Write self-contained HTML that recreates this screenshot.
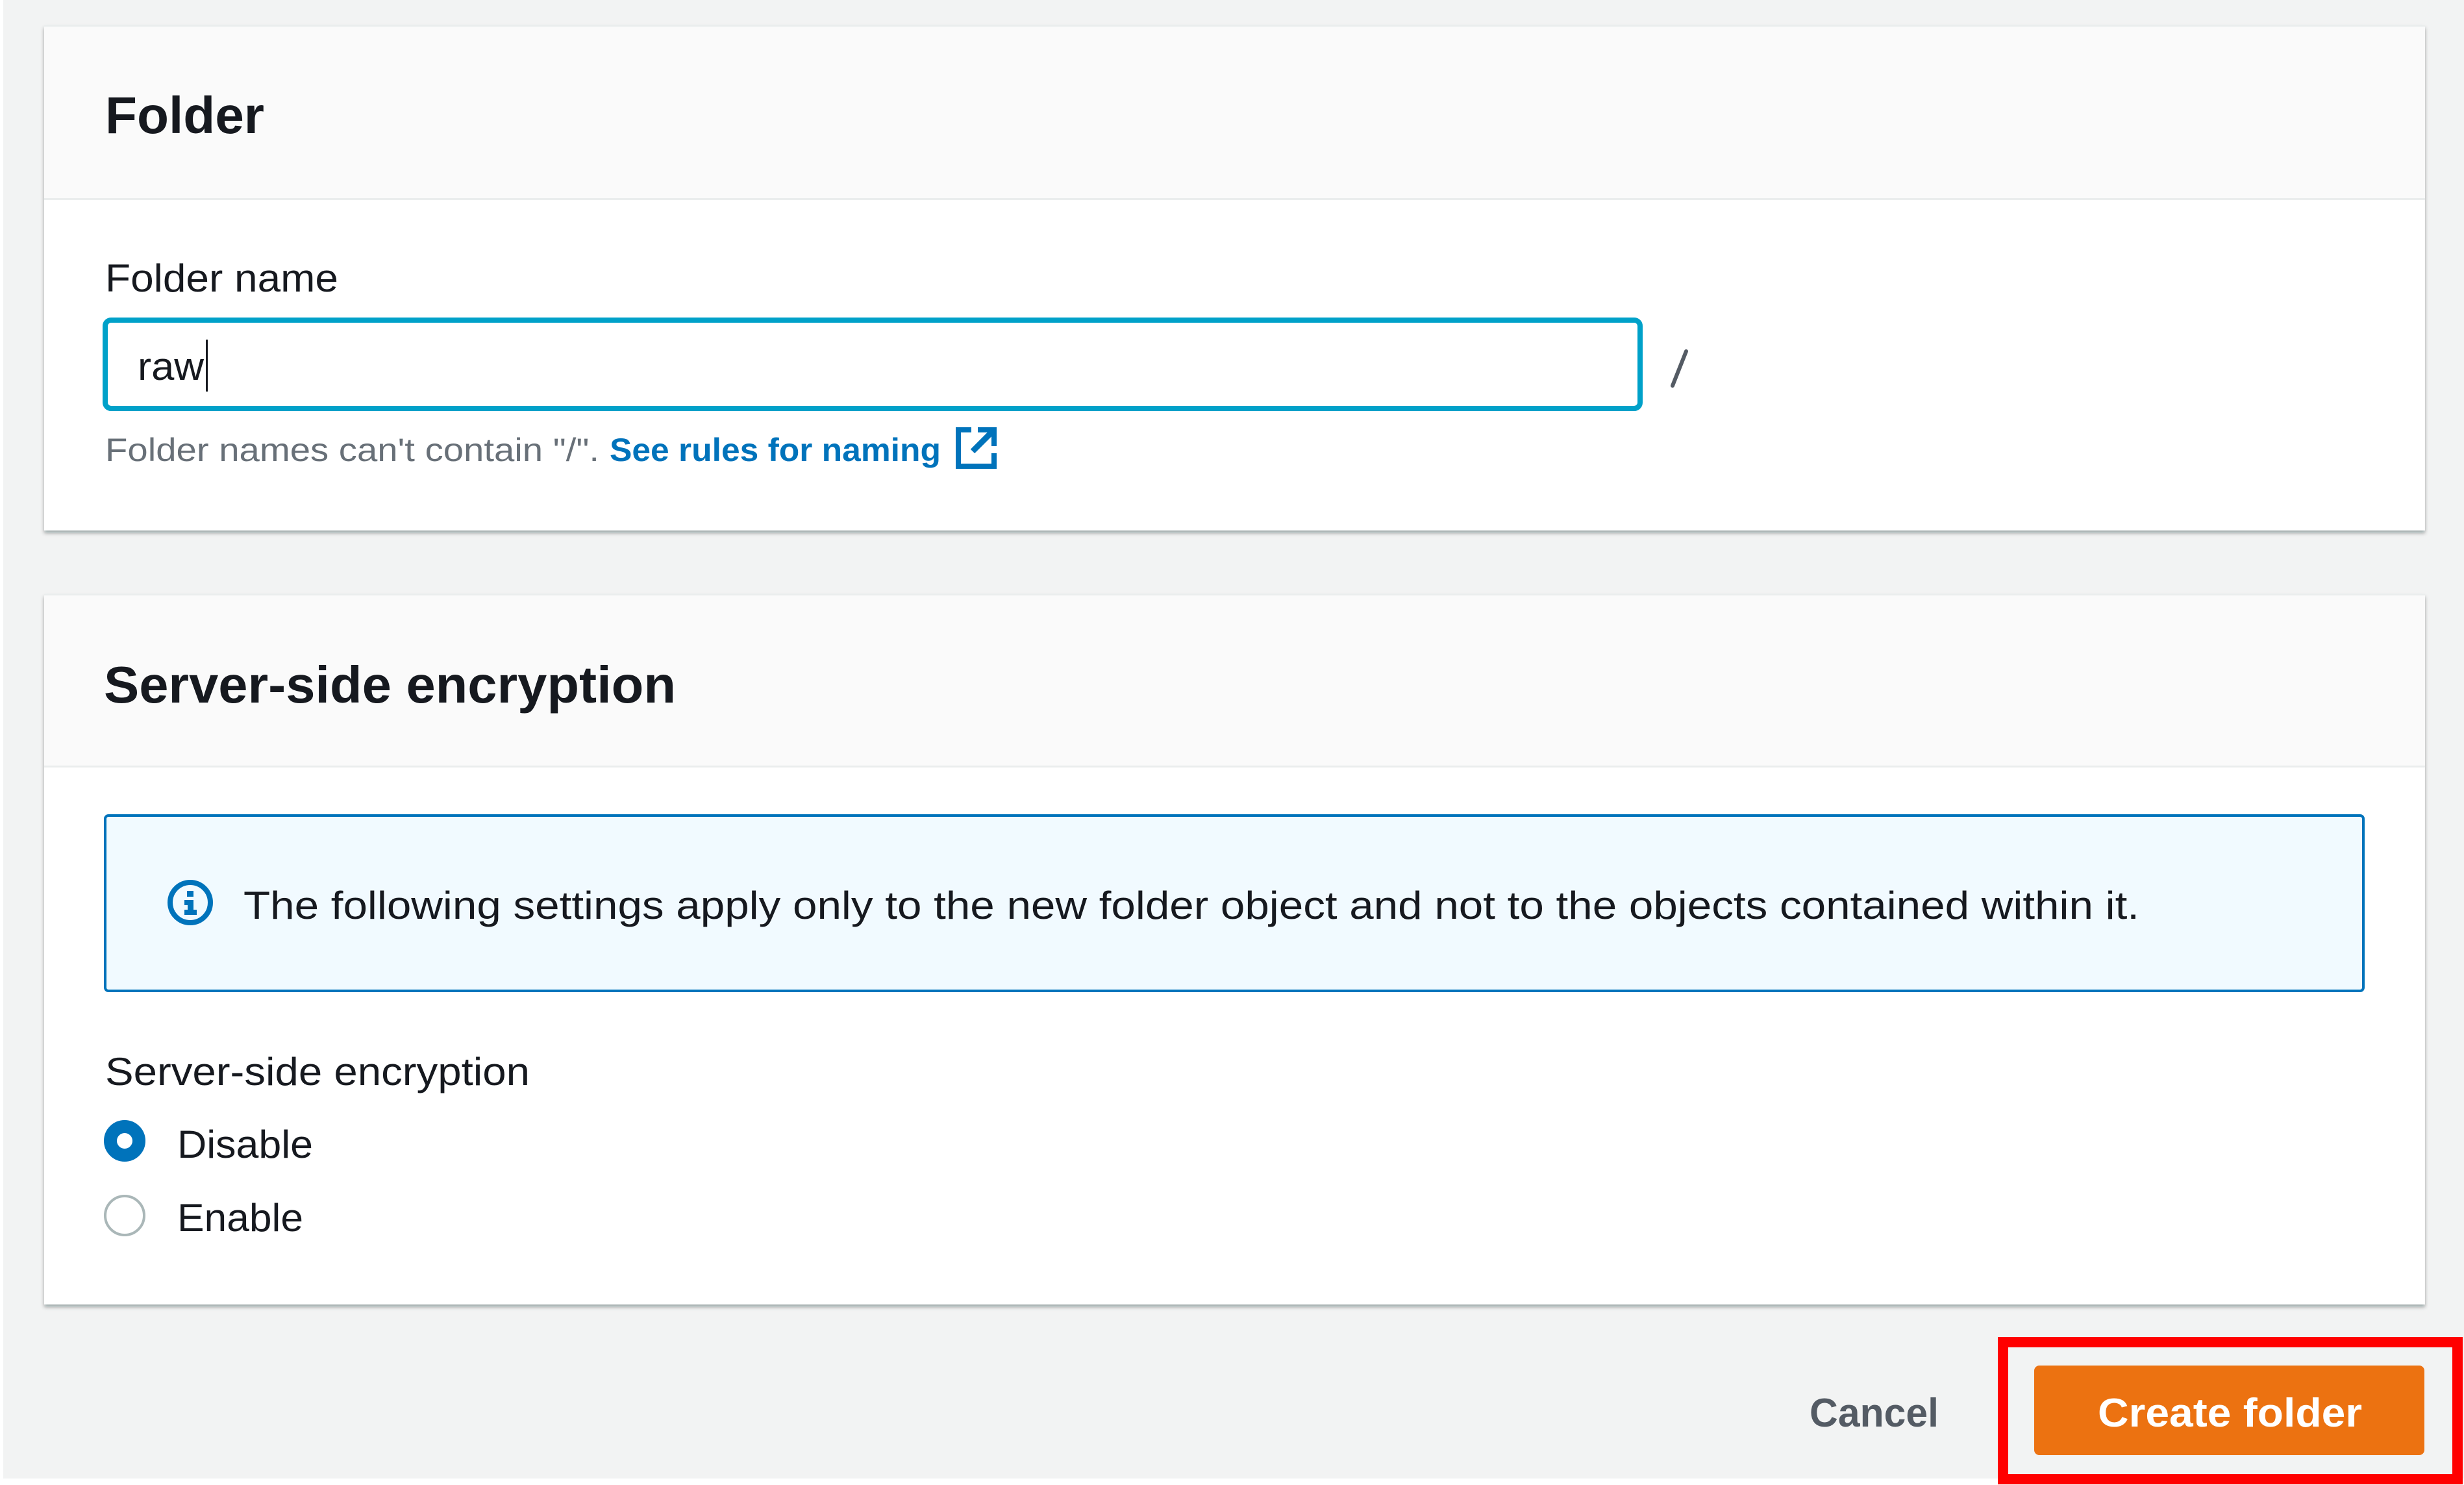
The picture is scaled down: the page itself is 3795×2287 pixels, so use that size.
<!DOCTYPE html>
<html><head><meta charset="utf-8"><style>
html,body{margin:0;padding:0;background:#f2f3f3;width:3795px;height:2287px;overflow:hidden}
svg{display:block}
text{font-family:"Liberation Sans",sans-serif}
</style></head><body>
<svg width="3795" height="2287" viewBox="0 0 3795 2287" xmlns="http://www.w3.org/2000/svg">
<defs>
<filter id="sh" x="-2%" y="-5%" width="104%" height="112%">
<feDropShadow dx="0" dy="4" stdDeviation="3" flood-color="#001c24" flood-opacity="0.35"/>
</filter>
</defs>
<rect x="0" y="0" width="3795" height="2287" fill="#f2f3f3"/>
<rect x="0" y="2277" width="3795" height="10" fill="#ffffff"/>
<rect x="0" y="0" width="5" height="2287" fill="#ffffff"/>

<!-- Card 1 -->
<g filter="url(#sh)"><rect x="68" y="39" width="3667" height="778" fill="#ffffff"/></g>
<rect x="68" y="39" width="3667" height="268" fill="#fafafa"/>
<rect x="68" y="305" width="3667" height="3" fill="#eaeded"/>
<rect x="68" y="39" width="3667" height="2" fill="#eaeded"/>
<text x="162" y="205" font-size="80" font-weight="bold" fill="#16191f" textLength="245" lengthAdjust="spacingAndGlyphs">Folder</text>
<text x="162" y="449" font-size="60" fill="#16191f" textLength="359" lengthAdjust="spacingAndGlyphs">Folder name</text>
<rect x="162" y="493" width="2364" height="136" rx="9" fill="#fff" stroke="#00a1c9" stroke-width="8"/>
<text x="212" y="585" font-size="60" fill="#16191f" textLength="102" lengthAdjust="spacingAndGlyphs">raw</text>
<rect x="317" y="523" width="3" height="80" fill="#16191f"/>
<line x1="2597" y1="541" x2="2576" y2="594" stroke="#545b64" stroke-width="6" stroke-linecap="round"/>
<text x="162" y="710" font-size="50" fill="#687078" textLength="761" lengthAdjust="spacingAndGlyphs">Folder names can't contain "/".</text>
<text x="939" y="710" font-size="50" font-weight="bold" fill="#0073bb" textLength="510" lengthAdjust="spacingAndGlyphs">See rules for naming</text>
<g fill="none" stroke="#0073bb" stroke-width="8">
<path d="M1496 662 H1476 V718 H1531 V698"/>
<path d="M1506 662 H1531 V687" />
<path d="M1529 664 L1498 695" stroke-width="9"/>
</g>

<!-- Card 2 -->
<g filter="url(#sh)"><rect x="68" y="915" width="3667" height="1094" fill="#ffffff"/></g>
<rect x="68" y="915" width="3667" height="266" fill="#fafafa"/>
<rect x="68" y="1179" width="3667" height="3" fill="#eaeded"/>
<rect x="68" y="915" width="3667" height="2" fill="#eaeded"/>
<text x="160" y="1082" font-size="80" font-weight="bold" fill="#16191f" textLength="881" lengthAdjust="spacingAndGlyphs">Server-side encryption</text>

<rect x="162" y="1256" width="3478" height="270" rx="5" fill="#f1faff" stroke="#0073bb" stroke-width="4"/>
<circle cx="293" cy="1390" r="31" fill="none" stroke="#0073bb" stroke-width="8"/>
<rect x="288" y="1372" width="10" height="9" fill="#0073bb"/>
<path d="M284 1386 H298 V1401 H303 V1409 H284 V1401 H289 V1394 H284 Z" fill="#0073bb"/>
<text x="375" y="1415" font-size="60" fill="#16191f" textLength="2920" lengthAdjust="spacingAndGlyphs">The following settings apply only to the new folder object and not to the objects contained within it.</text>

<text x="162" y="1671" font-size="60" fill="#16191f" textLength="654" lengthAdjust="spacingAndGlyphs">Server-side encryption</text>
<circle cx="192" cy="1757" r="22" fill="#fff" stroke="#0073bb" stroke-width="20"/>
<text x="273" y="1783" font-size="60" fill="#16191f" textLength="209" lengthAdjust="spacingAndGlyphs">Disable</text>
<circle cx="192" cy="1872" r="30" fill="#fff" stroke="#aab7b8" stroke-width="4"/>
<text x="273" y="1896" font-size="60" fill="#16191f" textLength="194" lengthAdjust="spacingAndGlyphs">Enable</text>

<!-- Footer buttons -->
<text x="2787" y="2197" font-size="62" font-weight="bold" fill="#545b64" textLength="199" lengthAdjust="spacingAndGlyphs">Cancel</text>
<rect x="3085" y="2067" width="700" height="211" fill="none" stroke="#ff0000" stroke-width="16"/>
<rect x="3133" y="2103" width="601" height="138" rx="8" fill="#ec7211"/>
<text x="3231" y="2197" font-size="62" font-weight="bold" fill="#ffffff" textLength="407" lengthAdjust="spacingAndGlyphs">Create folder</text>
</svg>
</body></html>
